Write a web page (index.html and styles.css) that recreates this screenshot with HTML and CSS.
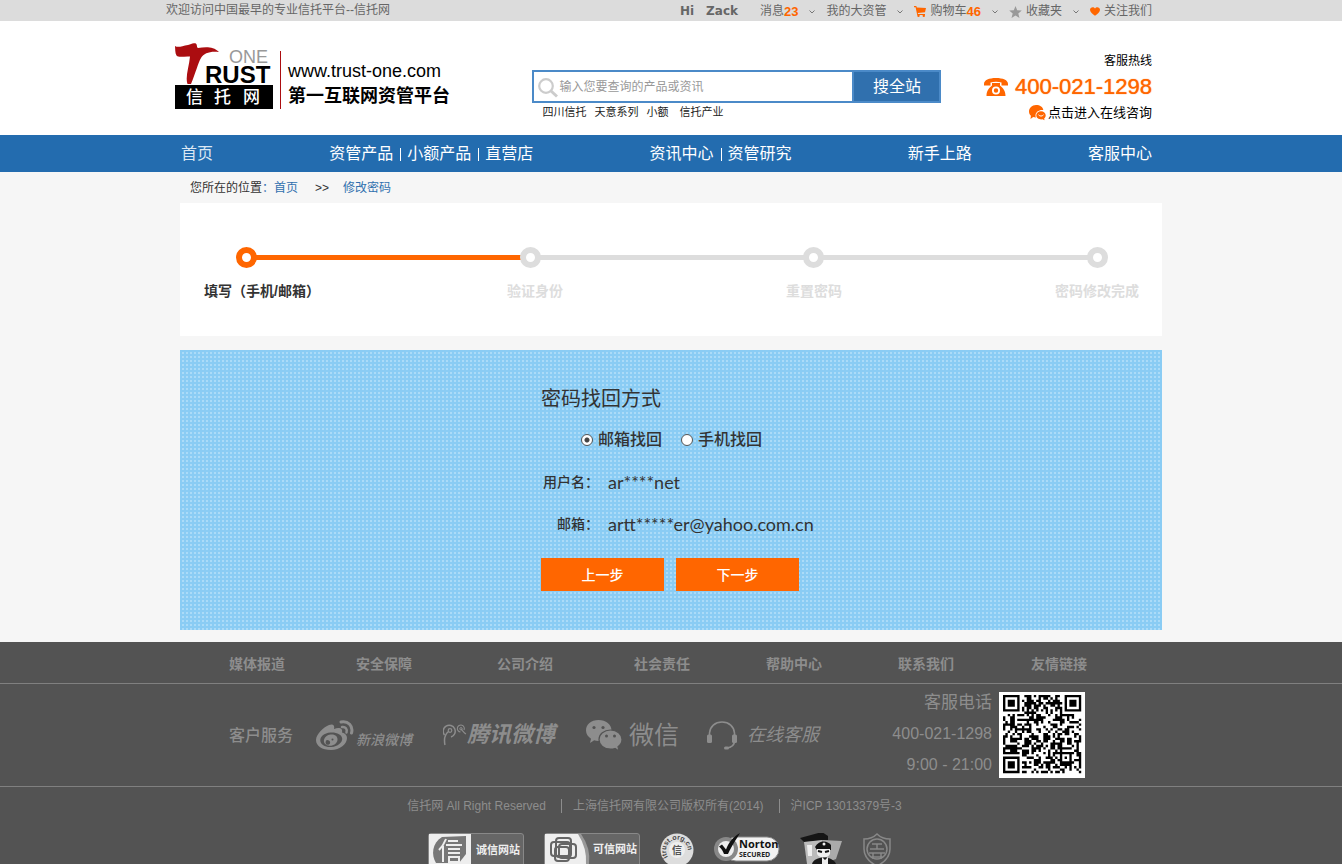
FILE: index.html
```html
<!DOCTYPE html>
<html lang="zh-CN">
<head>
<meta charset="utf-8">
<title>信托网 - 修改密码</title>
<link rel="stylesheet" href="styles.css">
</head>
<body>
<svg class="defs" width="0" height="0" aria-hidden="true">
  <symbol id="chevron" viewBox="0 0 6 4"><path d="M.5 .5 3 3 5.500 .5" fill="none" stroke="#777"/></symbol>
</svg>

<div class="topbar">
  <div class="topbar-inner">
    <p class="welcome">欢迎访问中国最早的专业信托平台--信托网</p>
    <div class="user-menu">
      <span class="hello"><b>Hi</b><b>Zack</b></span>
      <a href="#" class="menu-link">消息<b class="count">23</b></a>
      <svg class="chev"><use href="#chevron"/></svg>
      <a href="#" class="menu-link">我的大资管</a>
      <svg class="chev"><use href="#chevron"/></svg>
      <a href="#" class="menu-link"><svg class="menu-icon" width="12" height="11" viewBox="0 0 12 11"><path d="M0 0h2.300l.5 1.400L12 2 11 6.300 3.800 7l.2 1h7v1H3.200L1.600 1.200H0z" fill="#f60"/><circle cx="4.500" cy="9.800" r="1.200" fill="#f60"/><circle cx="9.800" cy="9.800" r="1.200" fill="#f60"/></svg>购物车<b class="count">46</b></a>
      <svg class="chev"><use href="#chevron"/></svg>
      <a href="#" class="menu-link"><svg class="menu-icon" width="13" height="12" viewBox="0 0 13 12"><path d="m6.500 0 1.700 4.200 4.600.3-3.500 2.900 1.200 4.500-4-2.500-4 2.500 1.200-4.500L.2 4.500l4.600-.3z" fill="#999"/></svg>收藏夹</a>
      <svg class="chev"><use href="#chevron"/></svg>
      <a href="#" class="menu-link"><svg class="menu-icon" width="10" height="9" viewBox="0 0 10 9"><path d="M5 8.800C2 6.500 0 5 0 2.700 0 .2 3.600-.7 5 1.500 6.400-.7 10 .2 10 2.700 10 5 8 6.500 5 8.800z" fill="#f60"/></svg>关注我们</a>
    </div>
  </div>
</div>

<header class="header">
  <div class="header-inner">
    <a href="#" class="brand">
      <svg class="logo" width="98" height="66" viewBox="0 0 98 66" role="img" aria-label="信托网 Trust One">
        <path d="M0 3C3 5 7 3 13 2 16 1.500 17-.3 20 .3 23 1 21 4 23 5 30 4 38 3 44 9c-9-1-15 1-18 6-3 5-5 14-10 26H12.500C10 34 14 24 15 13.500 9 13 4 15 1.500 12.500 0 10 .3 6 0 3z" fill="#ab0d10"/>
        <text x="54" y="20" class="logo-one">ONE</text>
        <text x="30" y="40" class="logo-rust">RUST</text>
        <path d="M0 42h98v24H0z"/>
        <text class="logo-cn"><tspan x="11" y="60">信</tspan><tspan x="39" y="60">托</tspan><tspan x="68" y="60">网</tspan></text>
      </svg>
      <span class="slogan"><span class="domain">www.trust-one.com</span><strong>第一互联网资管平台</strong></span>
    </a>
    <div class="search">
      <form class="search-form">
        <svg class="search-icon" width="20" height="20" viewBox="0 0 20 20"><circle cx="8" cy="8" r="6.800" fill="none" stroke="#ccc" stroke-width="2.200"/><path d="m12.500 12.500 6.500 6" stroke="#ccc" stroke-width="3"/></svg>
        <input type="text" aria-label="搜索" placeholder="输入您要查询的产品或资讯">
        <button type="button">搜全站</button>
      </form>
      <div class="hot-words"><a href="#">四川信托</a><a href="#">天意系列</a><a href="#">小额</a><a href="#" class="last">信托产业</a></div>
    </div>
    <div class="hotline">
      <span class="hotline-title">客服热线</span>
      <strong class="hotline-number"><svg width="24" height="18" viewBox="0 0 24 18"><path d="M0 6C0 2 5 0 12 0s12 2 12 6v1.500h-6.500V4.500C14 3.500 10 3.500 6.500 4.500v3H0z" fill="#f60"/><path fill-rule="evenodd" d="M8 5h8v2.500c3 2.500 5.500 5 5.500 10.500h-19C2.500 12.500 5 10 8 7.500zM12 8.500a4 4 0 1 0 0 8 4 4 0 0 0 0-8zm0 1.800a2.200 2.200 0 1 1 0 4.400 2.200 2.200 0 0 1 0-4.400z" fill="#f60"/></svg>400-021-1298</strong>
      <a href="#" class="consult"><svg width="17" height="16" viewBox="0 0 17 16"><path d="M7 0c4 0 7 2 7.300 5C10 4.500 6.500 7 6.500 10.500c0 1 .2 1.500.5 2-1 0-2-.2-2.800-.5L1.500 14l.4-3.200C.5 9.500 0 8 0 6.500 0 3 3 0 7 0z" fill="#f60"/><path d="M12 6.300c2.600 0 4.700 1.700 4.700 4 0 1.300-.5 2.200-1.500 3l.3 2-2-1c-3.300.5-6.200-1.200-6.200-4 0-2.300 2-4 4.700-4z" fill="#f60"/><path d="M9.500 9.800c1.500 1.700 3.500 1.700 5 0" fill="none" stroke="#fff"/></svg>点击进入在线咨询</a>
    </div>
  </div>
</header>

<nav class="nav">
  <div class="nav-inner">
    <div class="nav-group home"><a href="#">首页</a></div>
    <div class="nav-group"><a href="#">资管产品</a><a href="#">小额产品</a><a href="#">直营店</a></div>
    <div class="nav-group"><a href="#">资讯中心</a><a href="#">资管研究</a></div>
    <div class="nav-group"><a href="#">新手上路</a></div>
    <div class="nav-group"><a href="#">客服中心</a></div>
  </div>
</nav>

<main class="main">
  <div class="crumbs"><span>您所在的位置<a href="#">：首页</a></span><span class="sep">&gt;&gt;</span><a href="#">修改密码</a></div>

  <section class="steps">
    <div class="track">
      <i class="dot active"></i><i class="line active"></i><i class="dot"></i><i class="line"></i><i class="dot"></i><i class="line"></i><i class="dot"></i>
    </div>
    <ol class="step-labels">
      <li class="active">填写（手机/邮箱）</li>
      <li>验证身份</li>
      <li>重置密码</li>
      <li>密码修改完成</li>
    </ol>
  </section>

  <section class="panel">
    <form class="recover">
      <h1>密码找回方式</h1>
      <div class="methods">
        <label><input type="radio" name="method" checked>邮箱找回</label>
        <label><input type="radio" name="method">手机找回</label>
      </div>
      <dl class="info">
        <dt>用户名：</dt><dd>ar****net</dd>
        <dt>邮箱：</dt><dd>artt*****er@yahoo.com.cn</dd>
      </dl>
      <div class="actions"><button type="button">上一步</button><button type="button">下一步</button></div>
    </form>
  </section>
</main>

<footer class="footer">
  <div class="footer-links">
    <div class="footer-links-inner">
      <a href="#">媒体报道</a><a href="#">安全保障</a><a href="#">公司介绍</a><a href="#">社会责任</a><a href="#">帮助中心</a><a href="#">联系我们</a><a href="#">友情链接</a>
    </div>
  </div>
  <div class="service">
    <div class="service-inner">
      <span class="service-title">客户服务</span>
      <a href="#" class="sina"><svg width="38" height="31" viewBox="0 0 38 31"><path fill-rule="evenodd" d="M13 5c4-1.500 6 .3 5 4 5-2 9-1 8 3.500 3 .8 5 2.500 5 5.500 0 6-7 12-16 12S0 26 0 20 8 7 13 5zm1.500 7.500C8 13 4 16.500 4.300 20.800c.3 4 5 6.700 11.200 6.200s11-4.500 10.700-8.500c-.4-4-5.700-6.500-11.700-6z" fill="#8d8d8d"/><path fill-rule="evenodd" d="M14.500 14.500c4.500-.6 7.500 2 7 5.500s-4 6-8 5.800-6.200-3-5.500-6 3.300-5 6.500-5.300zm-2.200 5.700a2.300 2.300 0 1 0 .1 4.500 2.300 2.300 0 0 0-.1-4.500zm4.200-1.800a1 1 0 1 0 0 2 1 1 0 0 0 0-2z" fill="#8d8d8d"/><path d="M25 2c7-1.500 12.500 4 10.500 11" fill="none" stroke="#8d8d8d" stroke-width="3" stroke-linecap="round"/><path d="M26 7c3.500-.5 5.500 2 4.500 5.500" fill="none" stroke="#8d8d8d" stroke-width="2.500" stroke-linecap="round"/></svg><em>新浪微博</em></a>
      <a href="#" class="tencent"><svg width="24" height="22" viewBox="0 0 24 22"><g fill="none" stroke="#8d8d8d"><path d="M2 21C.5 14 2 10 6 7M1.500 11A6 6 0 1 1 8 13" stroke-width="1.500"/><circle cx="7" cy="6.500" r="1.800" stroke-width="1.200"/><path d="M17.500 8A3.500 3.500 0 1 1 21 6" stroke-width="1.100"/><circle cx="18" cy="4.800" r="1.200"/><path d="M18 5c2 2 3 4 5 5" stroke-width="1.100"/></g></svg><em>腾讯微博</em></a>
      <a href="#" class="wechat"><svg width="36" height="31" viewBox="0 0 36 31"><path d="M12.500 0C20 0 25.500 4.500 25.500 10.500S20 21 12.500 21c-1.700 0-3-.2-4.300-.7L4 23l1-4.300C2 16.800 0 14 0 10.500 0 4.500 5 0 12.500 0z" fill="#8d8d8d"/><path d="M24.500 10C31 10 36 14 36 19.500c0 3-1.500 5.500-4 7.300L33 31l-4-2.500c-1.300.4-3 .6-4.500.6-6.500 0-11.500-4-11.500-9.500S18 10 24.500 10z" fill="#8d8d8d" stroke="#535353" stroke-width="1.200"/><g fill="#535353"><circle cx="8" cy="7.500" r="1.600"/><circle cx="17" cy="7.500" r="1.600"/><circle cx="20.500" cy="16" r="1.500"/><circle cx="28.500" cy="16" r="1.500"/></g></svg><span>微信</span></a>
      <a href="#" class="online"><svg width="30" height="29" viewBox="0 0 30 29"><path d="M2.500 14V12C3 5.500 8 1 15 1s12 4.500 12.500 11v8c0 4-3 6.500-8 7" fill="none" stroke="#8d8d8d" stroke-width="1.600"/><rect y="13.500" width="5" height="8.500" rx="1.500" fill="#8d8d8d"/><rect x="25" y="13.500" width="5" height="8.500" rx="1.500" fill="#8d8d8d"/><rect x="17" y="25.500" width="5" height="3" rx="1.500" fill="#8d8d8d"/></svg><em>在线客服</em></a>
      <div class="contact"><span class="contact-title">客服电话</span><span>400-021-1298</span><span>9:00 - 21:00</span></div>
      <svg class="qr" width="86" height="86" viewBox="-4 -3 86 86" role="img" aria-label="二维码"><path d="M-4-3h86v86H-4z" fill="#fff"/><path id="qr-modules" transform="scale(2.370)"/></svg>
    </div>
  </div>
  <div class="legal"><span>信托网 All Right Reserved</span><span>上海信托网有限公司版权所有(2014)</span><span>沪ICP 13013379号-3</span></div>
  <div class="badges">
    <svg width="96" height="31" viewBox="0 0 96 31"><path d="M.5 31V3a2.500 2.500 0 0 1 2.500-2.500h90A2.500 2.500 0 0 1 95.500 3v28" fill="#666" stroke="#888"/><path d="M1 31V1h42v30z" fill="#eee"/><path d="M14 4 38 3v18l-7 9H8C3 22 4 10 14 4z" fill="#777"/><path d="M18 6c-2 5-4 8-7 11M15 13v16M20 8h10M18 12h16M20 16h12M20 20h12M21 24h10v5H21z" fill="none" stroke="#eee" stroke-width="2"/><text x="48" y="21" class="badge-cn">诚信网站</text></svg>
    <svg width="96" height="31" viewBox="0 0 96 31"><path d="M.5 31V3a2.500 2.500 0 0 1 2.500-2.500h90A2.500 2.500 0 0 1 95.500 3v28" fill="#666" stroke="#888"/><path d="M1 31V1h36q10 14 8 30z" fill="#999"/><path d="M1 31V1h33q9 14 8 30z" fill="#eee"/><g fill="none" stroke="#666" stroke-width="2"><rect x="7" y="9" width="19" height="14" rx="3"/><rect x="12" y="5" width="15" height="19" rx="3"/><rect x="15" y="11" width="17" height="14" rx="3"/><rect x="11" y="14" width="14" height="14" rx="3"/></g><text x="49" y="20" class="badge-cn">可信网站</text></svg>
    <svg width="34" height="31" viewBox="0 0 34 31"><circle cx="17" cy="17" r="16.500" fill="#ddd"/><circle cx="17" cy="17" r="8" fill="#eee"/><path id="ring" d="M8 24a11 11 0 1 1 18 0" fill="none"/><text class="ring-text"><textPath href="#ring">itrust.org.cn</textPath></text><text x="12" y="21" class="ring-cn">信</text></svg>
    <svg width="66" height="31" viewBox="0 0 66 31"><rect x="10" y="4" width="55" height="24" rx="12" fill="#f2f2f2" stroke="#888"/><circle cx="12" cy="16" r="12" fill="#888"/><circle cx="12" cy="16" r="8" fill="#eee"/><path d="M5 13.500 8 11.500l4 5C15 9 19 4 26 0c-4 7-8 12-12 21h-4C9 18 7.500 16 5 13.500z" fill="#111"/><text x="25" y="15" class="norton">Norton</text><text x="25" y="24" class="secured">SECURED</text></svg>
    <svg width="43" height="31" viewBox="0 0 43 31"><path d="M0 5 22-1l6 4v4L4 9z" fill="#151515"/><path d="M4 9 22 7v24H7z" fill="#bbb"/><path d="M7 12h5v11H8z" fill="#eee"/><path d="m22 7 20 1-6 18-8 3z" fill="#aaa"/><path d="M15 14c4-7 12-7 16-2v5H17z" fill="#111"/><path d="M17 16h13v5c-3 5-10 5-13 0z" fill="#eee"/><path d="m18 18 4 1m3 0 4-1" stroke="#111" stroke-width="2"/><path d="M12 31c2-8 20-9 24 0z" fill="#181818"/><path d="m22 24 3 3 3-3v7h-6z" fill="#eee"/><circle cx="24" cy="11" r="1.500" fill="#eee"/></svg>
    <svg width="28" height="31" viewBox="0 0 28 31"><g fill="none" stroke="#888" stroke-width="1.500"><path d="M14 1c4 4 8 5 13 5v10c0 8-5 13-13 17C6 29 1 24 1 16V6c5 0 9-1 13-5z"/><circle cx="14" cy="16" r="10"/><path d="M9 11h10M7 16h14M14 11v5M6 20h16M10 20v6m8-6v6M9 24h10"/></g></svg>
  </div>
</footer>
<script src="script.js"></script>
</body>
</html>
```
FILE: styles.css
```css
* { box-sizing: border-box; }
body {
  margin: 0;
  background: #f6f6f6;
  color: #333;
  font: 12px/20px "Liberation Sans", "Noto Sans CJK SC", sans-serif;
}
a { color: inherit; text-decoration: none; }
p, h1, ol, dl, dd { margin: 0; padding: 0; }
svg { display: block; flex: none; }
button, input { font: inherit; }
.defs { position: absolute; }

.topbar { background: #dcdcdc; color: #666; }
.topbar-inner {
  display: flex;
  justify-content: space-between;
  max-width: 986px;
  min-height: 21px;
  margin-left: max(0px, calc(50% - 505px));
}
.user-menu { display: flex; align-items: center; gap: 11px; padding-top: 2px; }
.hello { display: flex; gap: 12px; margin-right: 11px; font: bold 12px/19px "DejaVu Sans", sans-serif; }
.menu-link { display: flex; align-items: center; line-height: 19px; }
.menu-icon { margin-right: 4px; }
.count { color: #f60; font-size: 13px; }
.chev { width: 6px; height: 4px; }

.header { background: #fff; }
.header-inner {
  display: flex;
  justify-content: space-between;
  max-width: 977px;
  min-height: 114px;
  margin-left: max(0px, calc(50% - 496px));
  color: #000;
}
.brand { display: flex; align-items: flex-start; padding-top: 22px; }
.logo-one { font: 18px "Liberation Sans", sans-serif; fill: #999; }
.logo-rust { font: bold 24px "Liberation Sans", sans-serif; }
.logo-cn { font: 500 17px "Noto Sans CJK SC", sans-serif; fill: #fff; }
.slogan {
  display: flex;
  flex-direction: column;
  margin: 8px 0 0 7px;
  padding: 8px 0 0 7px;
  border-left: 1px solid #ab0d10;
}
.domain { font-size: 18px; line-height: 24px; }
.slogan strong { font-size: 18px; line-height: 26px; font-weight: 700; }
.search { width: 409px; padding-top: 49px; margin-left: 40px; }
.search-form {
  display: flex;
  align-items: center;
  height: 33px;
  border: 2px solid #4b8ac8;
}
.search-icon { margin: 3px 0 0 4px; }
.search input { flex: 1; min-width: 0; border: 0; padding: 0 1px; outline: 0; background: none; }
.search input::placeholder { color: #999; }
.search button {
  align-self: stretch;
  width: 87px;
  border: 0;
  border-left: 2px solid #4b8ac8;
  padding: 0;
  background: #3070ae;
  color: #fff;
  font-size: 16px;
}
.hot-words { display: flex; gap: 8px; padding-left: 10px; font-size: 11px; line-height: 18px; color: #222; }
.hot-words .last { margin-left: 3px; }
.hotline { display: flex; flex-direction: column; align-items: flex-end; padding-top: 30px; }
.hotline-number {
  display: flex;
  align-items: center;
  gap: 7px;
  color: #f60;
  font-size: 22px;
  line-height: 32px;
  font-weight: 400;
  text-shadow: 0 0 1px #f60;
}
.consult { display: flex; align-items: center; gap: 2px; font-size: 13px; }

.nav { background: #236caf; color: #fff; font-size: 16px; line-height: 37px; }
.nav-inner {
  display: flex;
  justify-content: space-between;
  max-width: 971px;
  margin-left: max(0px, calc(50% - 490px));
}
.nav-group { display: flex; align-items: center; }
.nav-group.home { color: #dbe8f4; }
.nav-group a + a::before {
  content: "";
  display: inline-block;
  width: 1px;
  height: 13px;
  margin: 0 6px 0 7px;
  background: #fff;
  vertical-align: -2px;
}

.main { max-width: 982px; margin: 0 auto; }
.crumbs { display: flex; padding: 6px 10px 5px; }
.crumbs a { color: #3070ae; }
.crumbs .sep { margin: 0 14px 0 17px; }

.steps { background: #fff; padding: 44px 0 35px; }
.track { display: flex; align-items: center; padding: 0 54px 0 56px; }
.dot { width: 21px; height: 21px; border: 6px solid #ddd; border-radius: 50%; }
.line { flex: 1; height: 5px; background: #ddd; margin: 0 -1px; }
.dot.active { border-color: #f60; }
.line.active { background: #f60; }
.step-labels {
  display: flex;
  list-style: none;
  padding: 13px 23px 0 24px;
  font-size: 14px;
  font-weight: 700;
  color: #ddd;
  white-space: nowrap;
}
.step-labels li { flex: 303 0 0; }
.step-labels li:nth-child(2) { flex-grow: 279; }
.step-labels li:nth-child(3) { flex-grow: 269; }
.step-labels li:nth-child(4) { flex-grow: 84; }
.step-labels .active { color: #333; }

.panel {
  margin-top: 14px;
  padding: 34px 20px 39px;
  background: conic-gradient(from 90deg at 2px 2px, #abdbf8 90deg, #8accf4 0) 0 0 / 4px 4px;
}
.recover { width: 260px; margin: 0 auto; }
h1 { font-size: 20px; line-height: 30px; font-weight: 400; }
.methods { display: flex; gap: 19px; padding: 14px 0 0 40px; font-size: 16px; line-height: 24px; font-weight: 500; white-space: nowrap; }
.methods label { display: flex; align-items: center; }
.methods input {
  appearance: none;
  width: 12px;
  height: 12px;
  margin: 0 5px 0 0;
  border: 1px solid #555;
  border-radius: 50%;
  background: #fff;
}
.methods input:checked { background: radial-gradient(circle, #444 2px, #fff 3px); }
.info { display: grid; grid-template-columns: 58px max-content; column-gap: 9px; padding-top: 9px; line-height: 42px; }
.info dt { font-size: 14px; font-weight: 500; text-align: right; }
.info dd { font-family: Lato, sans-serif; font-size: 18px; }
.actions { display: flex; gap: 12px; padding-top: 13px; }
.actions button {
  width: 123px;
  height: 33px;
  flex: none;
  border: 0;
  background: #f60;
  color: #fff;
  font-size: 14px;
  font-weight: 500;
}

.footer { margin-top: 12px; background: #535353; color: #8d8d8d; }
.footer-links { border-bottom: 1px solid #808080; }
.footer-links-inner {
  display: grid;
  grid-template-columns: 127fr 141fr 137fr 132fr 132fr 133fr 56fr;
  max-width: 858px;
  margin-left: max(0px, calc(50% - 442px));
  padding: 12px 0 9px;
  font-size: 14px;
  font-weight: 700;
  white-space: nowrap;
}
.service { border-bottom: 1px solid #808080; }
.service-inner {
  display: flex;
  align-items: center;
  max-width: 856px;
  min-height: 102px;
  margin-left: max(0px, calc(50% - 442px));
  white-space: nowrap;
}
.service-inner a { display: flex; align-items: center; }
.service-title { font-size: 16px; font-weight: 500; margin-right: 23px; padding-top: 2px; }
.sina { font-size: 14px; font-weight: 500; gap: 2px; margin-right: 31px; }
.sina em { padding-top: 10px; }
.tencent { font-size: 22px; font-weight: 700; margin-right: 31px; }
.wechat { font-size: 25px; gap: 7px; margin-right: 28px; }
.online { font-size: 18px; gap: 10px; }
.contact {
  display: flex;
  flex-direction: column;
  align-items: flex-end;
  margin: 0 7px 0 auto;
  padding-bottom: 3px;
  font-size: 16px;
  line-height: 31px;
}
.contact-title { font-size: 17px; }
.legal { display: flex; justify-content: center; gap: 4px; padding: 9px 0 17px; margin-right: 33px; }
.legal span + span { background: linear-gradient(#8d8d8d, #8d8d8d) 11px 3px / 1px 14px no-repeat; padding-left: 23px; }
.badges { display: flex; justify-content: center; gap: 20px; margin-right: 23px; }
.badge-cn { font: bold 11px "Noto Sans CJK SC", sans-serif; fill: #eee; }
.ring-text { font: bold 7px "Liberation Sans", sans-serif; fill: #444; }
.ring-cn { font: bold 10px "Noto Sans CJK SC", sans-serif; fill: #555; }
.norton { font: bold 11px "Open Sans", sans-serif; fill: #111; }
.secured { font: bold 7px "Open Sans", sans-serif; fill: #222; }
```
FILE: script.js
```js
// Draws a 33x33 module QR-style code into the footer.
(function () {
  var size = 33, seed = 2014, d = "";
  function finder(x, y, left, top) {
    var dx = x - left, dy = y - top;
    if (dx < -1 || dx > 7 || dy < -1 || dy > 7) return null;
    var r = Math.max(Math.abs(dx - 3), Math.abs(dy - 3));
    return r === 3 || r < 2;
  }
  function fixed(x, y) {
    var spots = [[0, 0], [size - 7, 0], [0, size - 7]];
    for (var i = 0; i < spots.length; i++) {
      var hit = finder(x, y, spots[i][0], spots[i][1]);
      if (hit !== null) return hit;
    }
    var r = Math.max(Math.abs(x - 26), Math.abs(y - 26));
    if (r < 3) return r !== 1;
    if (x === 6 || y === 6) return (x + y) % 2 === 0;
    return null;
  }
  for (var y = 0; y < size; y++) {
    for (var x = 0; x < size; x++) {
      seed = (seed * 1103515 + 12345) % 2147483648;
      var on = fixed(x, y);
      if (on === null) on = seed / 2147483648 > 0.48;
      if (on) d += "M" + x + " " + y + "h1v1h-1z";
    }
  }
  document.getElementById("qr-modules").setAttribute("d", d);
})();
```
